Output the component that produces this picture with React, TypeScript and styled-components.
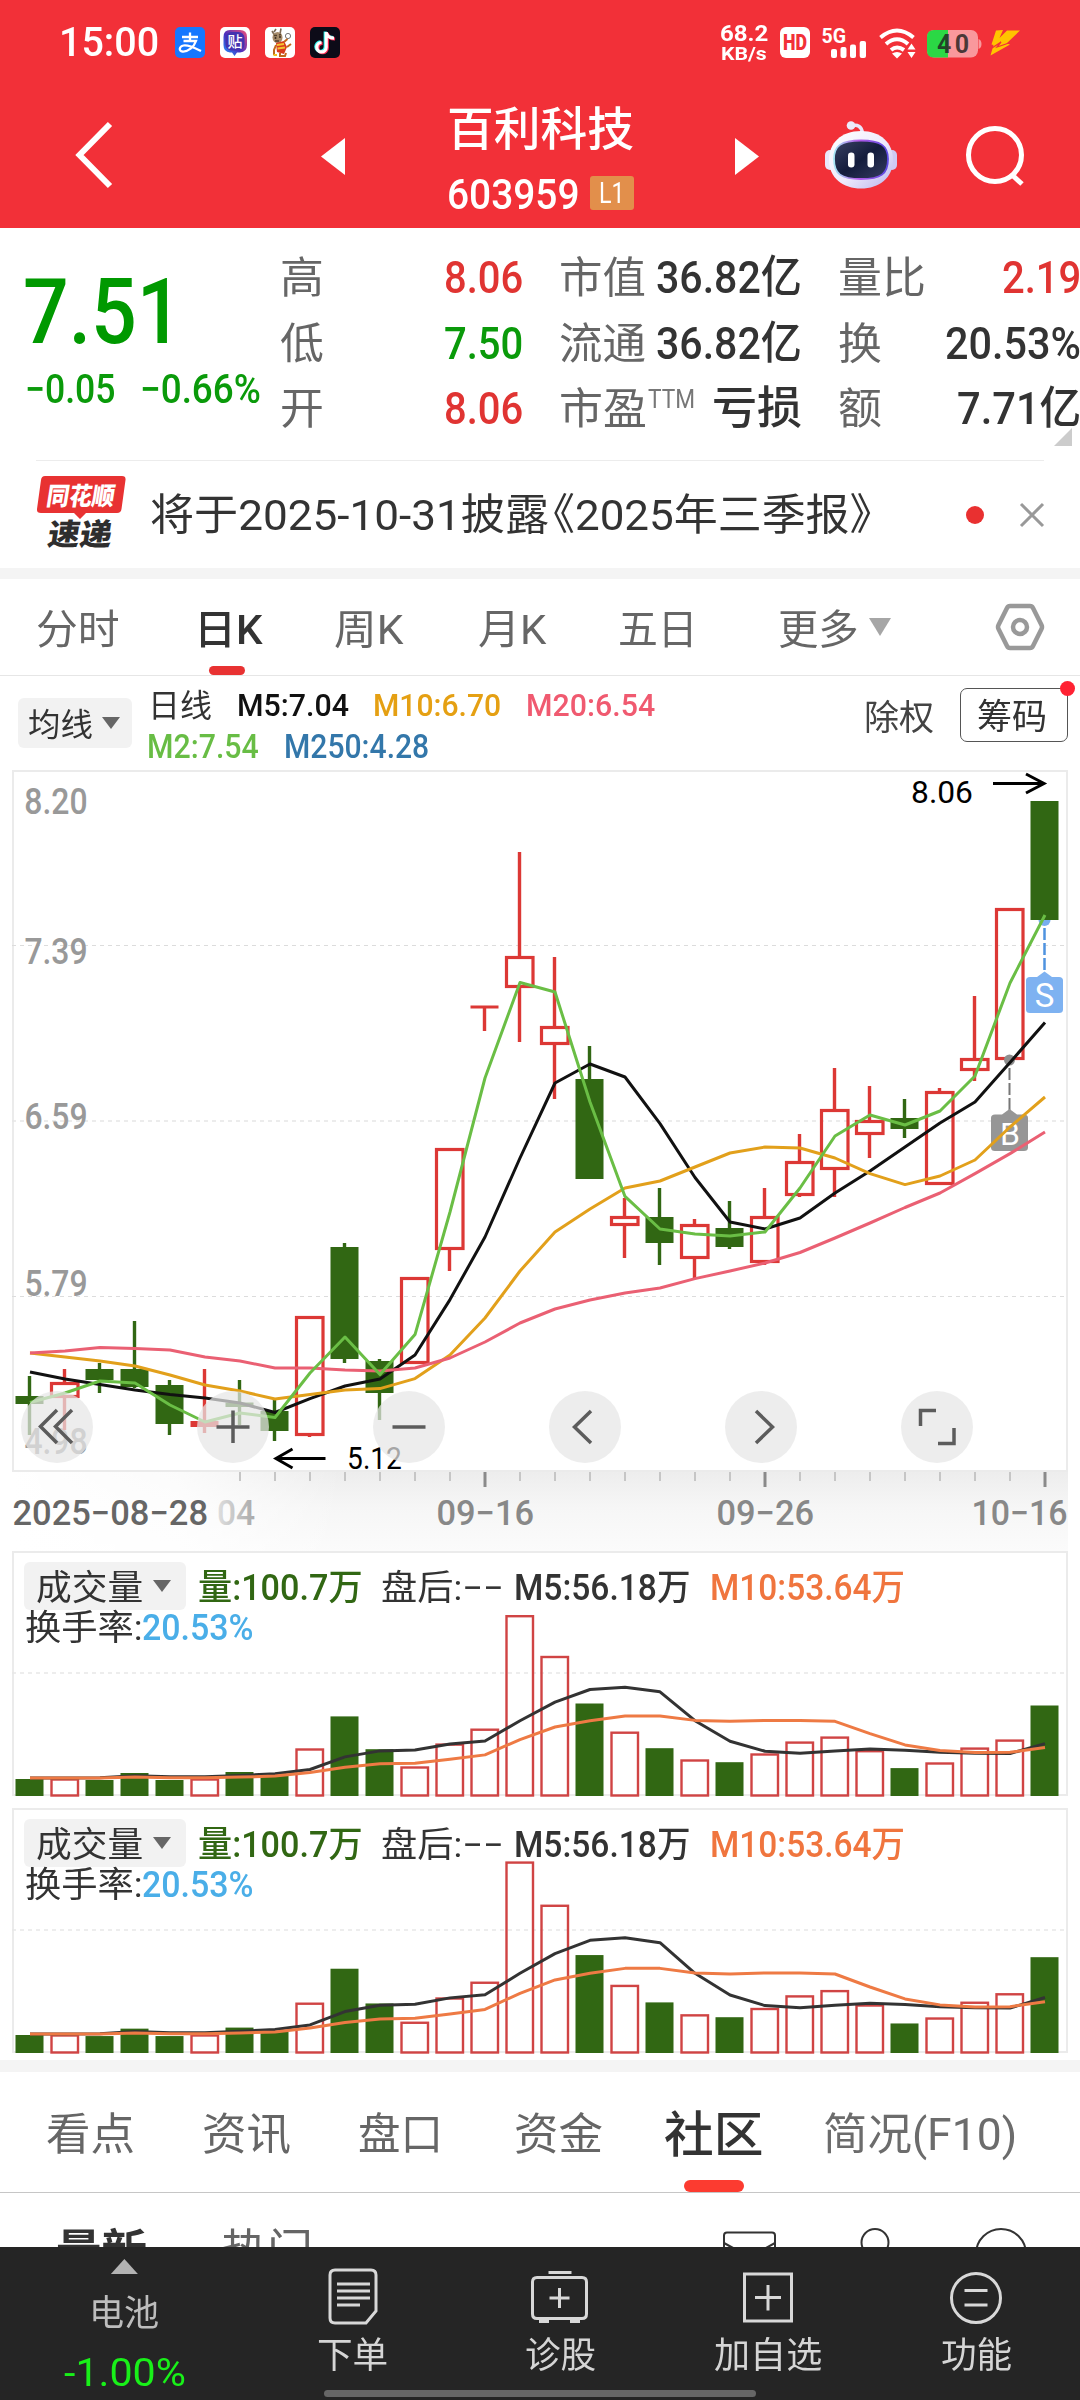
import React, { useLayoutEffect, useRef, useState } from "react";
import styled, { createGlobalStyle } from "styled-components";

const FONT = `Roboto, "Noto Sans CJK SC", sans-serif`;

const GlobalStyle = createGlobalStyle`
  * { box-sizing: border-box; }
  body { margin: 0; background: #fff; font-family: ${FONT}; }
  svg { display: block; flex: none; overflow: visible; }
  svg text { font-family: ${FONT}; }
`;

/* ---------- text set to a fixed measure ---------- */

const FitBox = styled.span<{ $w: number; $gap: number; $size: number; $weight: number; $color: string; $drop: number }>`
  display: block;
  flex: none;
  width: ${(p) => p.$w}px;
  height: ${(p) => p.$size}px;
  margin-left: ${(p) => p.$gap}px;
  font-size: ${(p) => p.$size}px;
  line-height: ${(p) => p.$size + p.$drop * 2}px;
  font-weight: ${(p) => p.$weight};
  color: ${(p) => p.$color};
  white-space: nowrap;
`;
const FitInner = styled.span`
  display: inline-block;
  margin-left: -0.045em;
  transform-origin: 0 50%;
  font-feature-settings: "halt";
`;

type FitProps = { w: number; size: number; gap?: number; weight?: number; color?: string; drop?: number; children: React.ReactNode };

function Fit({ w, size, gap = 0, weight = 400, color = "inherit", drop = 0, children }: FitProps) {
  const ref = useRef<HTMLSpanElement>(null);
  const [scale, setScale] = useState(1);
  useLayoutEffect(() => {
    if (ref.current) setScale((w + size * 0.09) / ref.current.offsetWidth);
  }, [w, size]);
  return (
    <FitBox $w={w} $gap={gap} $size={size} $weight={weight} $color={color} $drop={drop}>
      <FitInner ref={ref} style={{ transform: `scaleX(${scale})` }}>{children}</FitInner>
    </FitBox>
  );
}

/* ---------- page ---------- */

const Screen = styled.div`
  width: 1080px;
  height: 2400px;
  display: flex;
  flex-direction: column;
  overflow: hidden;
  background: #fff;
  color: #333;
`;
const Band = styled.div<{ $h: number }>`
  flex: none;
  height: ${(p) => p.$h}px;
  background: #f4f4f4;
`;

/* ---------- top ---------- */

const Top = styled.header`
  flex: none;
  height: 228px;
  background: #f23038;
  color: #fff;
`;
const StatusBar = styled.div`
  display: flex;
  align-items: center;
  height: 85px;
  padding-left: 61px;
`;
const StatusIcons = styled.div`
  display: flex;
  gap: 15px;
  margin-left: 18px;
`;
const StatusRight = styled.div`
  display: flex;
  align-items: center;
  margin-left: 381px;
`;
const Speed = styled.div`
  display: flex;
  flex-direction: column;
  width: 46px;
  margin-right: 13px;
`;
const NavBar = styled.div`
  display: flex;
  align-items: center;
  height: 143px;
`;
const TitleBlock = styled.div`
  width: 390px;
  height: 143px;
  padding: 21px 0 0 104px;
`;
const CodeRow = styled.div`
  display: flex;
  align-items: center;
  height: 34px;
  margin-top: 24px;
`;
const LevelBadge = styled.span`
  display: flex;
  align-items: center;
  justify-content: center;
  width: 44px;
  height: 34px;
  margin-left: 12px;
  border-radius: 3px;
  background: #e28f4b;
`;

function AlipayIcon() {
  return (
    <svg width="30" height="31" viewBox="0 0 30 31">
      <rect width="30" height="31" rx="5" fill="#1677ff" />
      <path d="M7 10H23M15 5.5V14M8.500 14H21C19 20 13 25 7.500 24.500C3.500 24 4 19.500 8.500 18.500C13.500 17.500 20 21 26 24" fill="none" stroke="#fff" strokeWidth="2.300" />
    </svg>
  );
}
function TiebaIcon() {
  return (
    <svg width="30" height="31" viewBox="0 0 30 31">
      <defs>
        <linearGradient id="tieba" x1="0" y1="1" x2="1" y2="0">
          <stop offset="0" stopColor="#1f9cff" /><stop offset=".45" stopColor="#4a2fc0" /><stop offset="1" stopColor="#f0507a" />
        </linearGradient>
      </defs>
      <rect width="30" height="31" rx="5" fill="#fff" />
      <path d="M10 3H20Q27 3 27 10V18Q27 25 20 25.500H17L14.500 29L12 25.500H10Q3.500 25 3.500 18V10Q3.500 3 10 3Z" fill="url(#tieba)" />
      <rect x="5.500" y="5" width="19" height="18.500" rx="6" fill="#4433b0" />
      <text x="15" y="20" fontSize="15" fontWeight="500" fill="#fff" textAnchor="middle">贴</text>
    </svg>
  );
}
function MascotIcon() {
  return (
    <svg width="30" height="31" viewBox="0 0 30 31">
      <rect width="30" height="31" rx="5" fill="#fff" />
      <path d="M7 4L10 9M16 1.500L15 7M9 5L11 2" stroke="#7b6a55" strokeWidth="1.600" fill="none" />
      <ellipse cx="12.500" cy="10.500" rx="5" ry="5.500" fill="#a58a68" />
      <path d="M9 8.500H12M14 8L16 7.500M10 14H14" stroke="#54402c" strokeWidth="1.300" />
      <circle cx="10.500" cy="11" r="1" fill="#3a2a1c" /><circle cx="15" cy="10" r="1" fill="#3a2a1c" />
      <circle cx="23" cy="9" r="2.600" fill="#fff" stroke="#777" strokeWidth="1" />
      <path d="M11 16L19 14L22 20L19 27L12 25Z" fill="#d93a1c" />
      <path d="M12 18L19 17M12.500 21.500L20 20.500" stroke="#f4c430" strokeWidth="2" />
      <path d="M19 15L22.500 12M11 18L9 23V28M15 26V29H20L21 26M22 20L26 17" stroke="#c2691c" strokeWidth="2" fill="none" />
      <path d="M8.500 28H12" stroke="#f0c020" strokeWidth="2" />
    </svg>
  );
}
function DouyinIcon() {
  const note = "M16.200 5V20.200A4.700 4.700 0 1 1 11.500 15.500M16.200 5.500C17 9 19.500 11 24 11.200";
  return (
    <svg width="30" height="31" viewBox="0 0 30 31">
      <rect width="30" height="31" rx="5" fill="#0d0b18" />
      <g fill="none" strokeWidth="3.200">
        <path d={note} stroke="#25f4ee" transform="translate(-1 -.6)" />
        <path d={note} stroke="#fe2c55" transform="translate(1.100 .8)" />
        <path d={note} stroke="#fff" />
      </g>
    </svg>
  );
}
function SignalCluster() {
  return (
    <svg width="240" height="36" viewBox="780 25 240 36">
      <rect x="780" y="27" width="30" height="31" rx="6" fill="#fff" />
      <text x="783" y="50" fontSize="21.500" fontWeight="900" fill="#f23038" textLength="24" lengthAdjust="spacingAndGlyphs">HD</text>
      <text x="821.500" y="42.500" fontSize="20" fontWeight="700" fill="#fff" textLength="24.500" lengthAdjust="spacingAndGlyphs">5G</text>
      <g fill="#fff">
        <rect x="831" y="49" width="6" height="9" rx="2" />
        <rect x="840.500" y="47" width="6" height="11" rx="2" />
        <rect x="850" y="44.500" width="6" height="13.500" rx="2" />
        <rect x="859.700" y="41" width="6.300" height="17" rx="2" />
      </g>
      <g fill="none" stroke="#fff" strokeWidth="4">
        <path d="M880.500 37.500Q897 23.500 913.500 37.500" />
        <path d="M886 44Q897 34.500 908 44" />
        <path d="M891 50Q897 45 904 50" />
      </g>
      <path d="M892 53.500Q897 50.500 902 53.500L897 58.500Z" fill="#fff" />
      <path d="M911.500 43.500L915.500 49.500H907.500ZM911.500 58L915.500 52H907.500Z" fill="#fff" />
      <rect x="927" y="30" width="51" height="27.500" rx="7" fill="#f9989c" />
      <path d="M978.500 39Q981.500 40 981.500 44Q981.500 48 978.500 49Z" fill="#f9989c" />
      <path d="M934 30H948V57.500H934Q927 57.500 927 50.500V37Q927 30 934 30Z" fill="#2bd845" />
      <text x="937" y="53" fontSize="25" fontWeight="700" fill="#222" fillOpacity=".82" textLength="32" lengthAdjust="spacing">40</text>
      <path d="M996 30.500L1003 30L999.500 38L1007 30.500H1020L1006.500 43.500L1010 44.500L990.500 55.500L993.500 45L991.500 44.500Z" fill="#ffc400" />
      <path d="M992 48L1001 42L997 47L1009 43" fill="none" stroke="#f23038" strokeWidth="1.300" />
    </svg>
  );
}
const Tri = styled.i<{ $dir: "left" | "right" }>`
  width: 24px;
  height: 37px;
  background: #fff;
  clip-path: ${(p) => (p.$dir === "left" ? "polygon(0 50%, 100% 0, 100% 100%)" : "polygon(100% 50%, 0 0, 0 100%)")};
`;
const BackSlot = styled.div`
  width: 321px;
  padding: 0 0 4px 72px;
`;
const NavActions = styled.div`
  display: flex;
  align-items: center;
  gap: 66px;
  margin-left: 64px;
  padding-bottom: 4px;
`;
function RobotIcon() {
  return (
    <svg width="76" height="72" viewBox="0 0 76 72">
      <defs>
        <linearGradient id="shell" x1="0" y1="0" x2="1" y2="1">
          <stop offset="0" stopColor="#fff" /><stop offset=".55" stopColor="#eeeafc" /><stop offset="1" stopColor="#b9b4ec" />
        </linearGradient>
        <linearGradient id="visor" x1="0" y1="0" x2="1" y2="1">
          <stop offset="0" stopColor="#3a4264" /><stop offset=".5" stopColor="#141c3c" /><stop offset="1" stopColor="#353c60" />
        </linearGradient>
        <linearGradient id="rim" x1="0" y1="0" x2="1" y2="0">
          <stop offset="0" stopColor="#a5e6f4" /><stop offset=".45" stopColor="#b45be8" /><stop offset="1" stopColor="#5a48e0" />
        </linearGradient>
      </defs>
      <path d="M28 7Q38 4 39.500 14" fill="none" stroke="#eae6fa" strokeWidth="3.500" />
      <circle cx="28" cy="6.500" r="4.300" fill="#ecebfb" />
      <rect x="2" y="31" width="10" height="20" rx="5" fill="#e9e6fb" />
      <rect x="64" y="31" width="10" height="20" rx="5" fill="#cfcaf4" />
      <path d="M38 12C58 12 70 24 70 41C70 59 56 69.500 38 69.500C20 69.500 6 59 6 41C6 24 18 12 38 12Z" fill="url(#shell)" />
      <path d="M38 21.500C58 21.500 65 27 65 40C65 55 58 60 38 60C18 60 11 55 11 40C11 27 18 21.500 38 21.500Z" fill="url(#visor)" stroke="url(#rim)" strokeWidth="1.800" />
      <rect x="25" y="33.500" width="6.500" height="15" rx="3.200" fill="#fff" />
      <rect x="44.500" y="33.500" width="6.500" height="15" rx="3.200" fill="#fff" />
    </svg>
  );
}

/* ---------- quote ---------- */

const Quote = styled.section`
  position: relative;
  display: flex;
  flex: none;
  height: 232px;
`;
const PriceBlock = styled.div`
  flex: none;
  width: 282px;
  padding: 39px 0 0 27px;
`;
const ChangeRow = styled.div`
  display: flex;
  margin-top: 12px;
`;
const StatColumn = styled.div`
  flex: none;
  width: 239px;
  margin-right: 40px;
  padding-top: 17px;
`;
const StatRow = styled.div`
  display: flex;
  align-items: center;
  justify-content: space-between;
  height: 65.600px;
`;
const StatLabel = styled.div`
  display: flex;
`;
const Corner = styled.i`
  position: absolute;
  left: 1054px;
  top: 200px;
  width: 18px;
  height: 18px;
  background: #ccc;
  clip-path: polygon(100% 0, 100% 100%, 0 100%);
`;

type Stat = { label: string; lw: number; value: string; vw: number; color?: string; sup?: boolean };
const RED = "#e03432";
const GREEN = "#0a9a0a";
const stats: Stat[][] = [
  [
    { label: "高", lw: 40, value: "8.06", vw: 75, color: RED },
    { label: "低", lw: 40, value: "7.50", vw: 75, color: GREEN },
    { label: "开", lw: 40, value: "8.06", vw: 75, color: RED },
  ],
  [
    { label: "市值", lw: 83, value: "36.82亿", vw: 142 },
    { label: "流通", lw: 83, value: "36.82亿", vw: 142 },
    { label: "市盈", lw: 84, value: "亏损", vw: 86, sup: true },
  ],
  [
    { label: "量比", lw: 84, value: "2.19", vw: 75, color: RED },
    { label: "换", lw: 40, value: "20.53%", vw: 132 },
    { label: "额", lw: 40, value: "7.71亿", vw: 120 },
  ],
];

/* ---------- notice ---------- */

const Notice = styled.section`
  flex: none;
  display: flex;
  align-items: center;
  height: 108px;
  margin: 0 36px;
  border-top: 1px solid #ececec;
`;
const LogoSlot = styled.span`
  margin-bottom: 5px;
`;
const Dot = styled.i<{ $d: number; $gap: number }>`
  flex: none;
  width: ${(p) => p.$d}px;
  height: ${(p) => p.$d}px;
  margin-left: ${(p) => p.$gap}px;
  border-radius: 50%;
  background: #e93030;
`;
const CloseSlot = styled.span`
  margin-left: 36px;
`;
function ExpressLogo() {
  return (
    <svg width="90" height="74" viewBox="0 0 90 74">
      <path d="M9 1H86Q90 1 89.500 5L85.500 34Q85 38 81 38H50L44 44L38 38H5Q.5 38 1 34L5 5Q5.500 1 9 1Z" fill="#e83232" />
      <g fontWeight="900">
        <text transform="translate(9.500 30) skewX(-9)" fontSize="25" fill="#fff" textLength="68" lengthAdjust="spacingAndGlyphs">同花顺</text>
        <text transform="translate(10.500 70) skewX(-9)" fontSize="30" fill="#2e2e2e" textLength="64" lengthAdjust="spacingAndGlyphs">速递</text>
      </g>
    </svg>
  );
}

/* ---------- period tabs ---------- */

const PeriodTabs = styled.nav`
  position: relative;
  flex: none;
  display: flex;
  align-items: center;
  height: 97px;
  padding-left: 38px;
  border-bottom: 1px solid #e6e6e6;
`;
const Underline = styled.i<{ $x: number; $w: number; $h: number; $color: string }>`
  position: absolute;
  bottom: 0;
  left: ${(p) => p.$x}px;
  width: ${(p) => p.$w}px;
  height: ${(p) => p.$h}px;
  border-radius: 6px;
  background: ${(p) => p.$color};
`;
const Caret = styled.i<{ $w: number; $h: number; $gap: number; $color: string }>`
  flex: none;
  width: ${(p) => p.$w}px;
  height: ${(p) => p.$h}px;
  margin-left: ${(p) => p.$gap}px;
  background: ${(p) => p.$color};
  clip-path: polygon(0 0, 100% 0, 50% 100%);
`;
const GearSlot = styled.span`
  margin-left: 104px;
`;

/* ---------- moving averages ---------- */

const AverageBar = styled.section`
  flex: none;
  display: flex;
  height: 94px;
  padding-left: 18px;
`;
const Picker = styled.button<{ $w: number; $h: number; $pad: number; $top?: number }>`
  flex: none;
  display: flex;
  align-items: center;
  width: ${(p) => p.$w}px;
  height: ${(p) => p.$h}px;
  margin-top: ${(p) => p.$top || 0}px;
  padding: 0 0 0 ${(p) => p.$pad}px;
  border: 0;
  border-radius: 6px;
  background: #f2f2f2;
  font-family: inherit;
  color: #333;
  text-align: left;
`;
const AverageLines = styled.div`
  width: 716px;
  padding-top: 13px;
`;
const AverageLine = styled.div`
  display: flex;
  height: 41px;
  padding-left: 17px;
`;
const ChipsButton = styled.button`
  position: relative;
  display: flex;
  align-items: center;
  width: 108px;
  height: 54px;
  margin: 12px 0 0 27px;
  padding: 0 0 0 18px;
  border: 1.500px solid #555;
  border-radius: 7px;
  background: #fff;
  font-family: inherit;
  text-align: left;
`;
const NewDot = styled.i`
  position: absolute;
  top: -8px;
  right: -8px;
  width: 15px;
  height: 15px;
  border-radius: 50%;
  background: #ff2233;
`;
const RightsSlot = styled.div`
  padding-top: 23px;
`;

/* ---------- charts ---------- */

type Candle = { up: boolean; top: number; bottom: number; high: number; low: number };
const c = (up: number, top: number, bottom: number, high = top, low = bottom): Candle => ({ up: !!up, top, bottom, high, low });
const candles: Candle[] = [
  c(0, 1396, 1404, 1376, 1435), c(1, 1382, 1398, 1369, 1430), c(0, 1369, 1380, 1363, 1393), c(0, 1369, 1387, 1321, 1388),
  c(0, 1385, 1424, 1380, 1435), c(1, 1421, 1427, 1369, 1433), c(0, 1402.5, 1407, 1380, 1425), c(0, 1411, 1431, 1400, 1441),
  c(1, 1316, 1436, 1316, 1437), c(0, 1247, 1359, 1243, 1363), c(0, 1361, 1393, 1359, 1420), c(1, 1277, 1364),
  c(1, 1148, 1250, 1148, 1271), c(1, 1006, 1008, 1006, 1031), c(1, 956, 988, 852, 1042), c(1, 1026, 1045, 957, 1099),
  c(0, 1079, 1179, 1046), c(1, 1216, 1226, 1198, 1258), c(0, 1217, 1243, 1188, 1265), c(1, 1224, 1259, 1219, 1278),
  c(0, 1228, 1247, 1201, 1249), c(1, 1216, 1263, 1188, 1265), c(1, 1161, 1196, 1134, 1197), c(1, 1109, 1170, 1068, 1197),
  c(1, 1120, 1135, 1086, 1158), c(0, 1118, 1129, 1099, 1138), c(1, 1091, 1185, 1088), c(1, 1058, 1071, 996, 1081),
  c(1, 908, 1060), c(0, 801, 920),
];
const ma5 = [1372, 1379, 1384.6, 1390, 1394.6, 1398, 1403, 1412.5, 1398.6, 1386, 1379, 1355, 1299.6, 1237, 1158, 1083, 1064, 1077, 1123.6, 1177.5, 1222, 1229, 1218, 1193, 1171, 1147, 1123, 1102, 1062.5, 1022.5];
const ma10 = [1353, 1357, 1361, 1366, 1375, 1385, 1391, 1399, 1394.6, 1390, 1388.6, 1378.6, 1355, 1318, 1271, 1232, 1209, 1188, 1181, 1167, 1153, 1147, 1148, 1158, 1173.6, 1184.6, 1176, 1160, 1127, 1097];
const ma20 = [1353, 1351, 1347.5, 1348.6, 1350, 1357, 1361, 1368, 1368, 1370, 1371, 1368, 1358, 1342, 1323, 1309, 1300, 1293, 1288, 1278.6, 1271, 1263, 1252.5, 1238, 1223, 1207.5, 1193, 1173.6, 1153.6, 1132];
const ma2 = [1402.5, 1393, 1381, 1383, 1405, 1422, 1413, 1417.5, 1373, 1337, 1374.6, 1334.6, 1212, 1078, 982.5, 992, 1102, 1196.4, 1229, 1234, 1236, 1232, 1188, 1136, 1115, 1125, 1111, 1076, 983, 915];
const xAt = (i: number) => 30 + 35 * i;
const line = (ys: number[]) => ys.map((y, i) => `${xAt(i)},${y}`).join(" ");

const ChartFrame = styled.section`
  position: relative;
  flex: none;
  width: 1056px;
  height: 702px;
  margin-left: 12px;
  border: 2px solid #ebebeb;
`;
const ChartSvg = styled.svg`
  margin: -2px;
`;
const ChartControls = styled.div`
  position: absolute;
  left: 7px;
  bottom: 7px;
  display: flex;
  gap: 104px;
`;
const RoundButton = styled.button`
  display: flex;
  align-items: center;
  justify-content: center;
  width: 72px;
  height: 72px;
  padding: 0;
  border: 0;
  border-radius: 50%;
  background: rgba(230, 230, 230, 0.72);
`;
const controlPaths = [
  "M36 19L19.500 35.500L36 52M51 19L34.500 35.500L51 52",
  "M36 19.500V52M19.500 36H52.500",
  "M19.500 36H52.500",
  "M42 20L25.500 36L42 52",
  "M31 20L47.500 36L31 52",
  "M19.500 35V19.500H35M53 37V52.500H37",
];

function Label({ x, y, w, size, fill, children, weight = 400 }: { x: number; y: number; w: number; size: number; fill: string; weight?: number; children: string }) {
  return (
    <text x={x - size * 0.045} y={y} fontSize={size} fontWeight={weight} fill={fill} textLength={w + size * 0.09} lengthAdjust="spacingAndGlyphs">{children}</text>
  );
}

function PriceChart() {
  return (
    <ChartSvg width="1056" height="702" viewBox="12 770 1056 702">
      <g stroke="#dcdcdc" strokeWidth="1" strokeDasharray="4 4">
        <path d="M12 945.500H1068" /><path d="M12 1121H1068" strokeWidth="1.500" stroke="#e6e6e6" /><path d="M12 1296.500H1068" />
      </g>
      <Label x={26} y={814} w={60} size={37} fill="#999" weight={500}>8.20</Label>
      <Label x={26} y={963.5} w={60} size={36} fill="#999" weight={500}>7.39</Label>
      <Label x={26} y={1129} w={60} size={36} fill="#999" weight={500}>6.59</Label>
      <Label x={26} y={1296} w={60} size={36} fill="#999" weight={500}>5.79</Label>
      <Label x={26} y={1454} w={60} size={36} fill="#999" weight={500}>4.98</Label>
      {candles.map((k, i) => {
        const x = xAt(i) - 0.5;
        const color = k.up ? "#dc3835" : "#316713";
        const hollow = k.up && k.bottom - k.top > 6;
        return (
          <g key={i}>
            {k.high < k.top && <path d={`M${x} ${k.high}V${k.top}`} stroke={color} strokeWidth="3.400" />}
            {k.low > k.bottom && <path d={`M${x} ${k.bottom}V${k.low}`} stroke={color} strokeWidth="3.400" />}
            {hollow ? (
              <rect x={x - 13} y={k.top + 1.5} width="26.500" height={k.bottom - k.top - 3} fill="none" stroke={color} strokeWidth="3.200" />
            ) : (
              <rect x={x - 14} y={k.top - (k.bottom - k.top < 3 ? 0.5 : 0)} width="28" height={Math.max(3, k.bottom - k.top)} fill={color} />
            )}
          </g>
        );
      })}
      <path d="M1038.500 920H1050.500A6 6 0 0 1 1038.500 920Z" fill="#78aeef" />
      <path d="M1044.500 928V972" stroke="#4f93df" strokeWidth="2.500" strokeDasharray="12 3" />
      <circle cx="1009.500" cy="1060" r="5.500" fill="#8e8e8e" />
      <path d="M1009.500 1068V1110" stroke="#777" strokeWidth="2" strokeDasharray="12 3" />
      <path d="M995 1114.500H1002L1009.500 1109L1017 1114.500H1024Q1028 1114.500 1028 1118V1147.500Q1028 1151 1024 1151H995Q991 1151 991 1147.500V1118Q991 1114.500 995 1114.500Z" fill="#969696" />
      <text x="1010" y="1145" fontSize="32" fill="#fff" textAnchor="middle">B</text>
      <g fill="none" strokeWidth="3" strokeLinejoin="round">
        <polyline points={line(ma5)} stroke="#111" />
        <polyline points={line(ma10)} stroke="#e2a01b" />
        <polyline points={line(ma20)} stroke="#ea6073" />
        <polyline points={line(ma2)} stroke="#6abe45" />
      </g>
      <path d="M1030 977H1037L1044.500 971.500L1052 977H1059Q1063 977 1063 980.500V1009.500Q1063 1013 1059 1013H1030Q1026 1013 1026 1009.500V980.500Q1026 977 1030 977Z" fill="#7eb2f1" />
      <text x="1044.500" y="1007" fontSize="33" fill="#fff" textAnchor="middle">S</text>
      <Label x={912.5} y={802.5} w={59} size={32} fill="#000">8.06</Label>
      <path d="M993 783.500H1044M1026 774L1044 783.500L1026 793" fill="none" stroke="#000" strokeWidth="3" />
      <Label x={348.5} y={1469} w={52} size={31} fill="#000">5.12</Label>
      <path d="M325.500 1458.500H276M292.500 1449L276 1458.500L292.500 1468" fill="none" stroke="#000" strokeWidth="3" />
    </ChartSvg>
  );
}

const AxisBox = styled.div`
  flex: none;
  height: 79px;
  padding-left: 12px;
`;
function DateAxis() {
  return (
    <svg width="1056" height="79" viewBox="12 1472 1056 79">
      <defs>
        <linearGradient id="shade" x1="0" y1="0" x2="0" y2="1">
          <stop offset="0" stopColor="#ededed" /><stop offset=".45" stopColor="#f6f6f6" /><stop offset="1" stopColor="#fbfbfb" />
        </linearGradient>
        <linearGradient id="veil" x1="0" y1="0" x2="1" y2="0">
          <stop offset="0" stopColor="#fff" /><stop offset=".5" stopColor="#fff" stopOpacity=".8" /><stop offset="1" stopColor="#fff" stopOpacity="0" />
        </linearGradient>
        <linearGradient id="fade" gradientUnits="userSpaceOnUse" x1="212" y1="0" x2="256" y2="0">
          <stop offset="0" stopColor="#e6e6e6" /><stop offset="1" stopColor="#a8a8a8" />
        </linearGradient>
      </defs>
      <rect x="12" y="1472" width="1056" height="79" fill="url(#shade)" />
      <rect x="12" y="1472" width="330" height="79" fill="url(#veil)" />
      {Array.from({ length: 24 }, (_, n) => n + 6).map((i) => {
        const major = i === 13 || i === 21 || i === 29;
        return <path key={i} d={`M${xAt(i)} 1472V${major ? 1487 : 1481}`} stroke={major ? "#8a8a8a" : "#c6c6c6"} strokeWidth={major ? 3 : 2} />;
      })}
      <Label x={14} y={1525} w={192.5} size={35} fill="#666" weight={500}>2025−08−28</Label>
      <Label x={218.5} y={1525} w={35} size={35} fill="url(#fade)" weight={500}>04</Label>
      <Label x={438} y={1525} w={94.5} size={35} fill="#888" weight={500}>09−16</Label>
      <Label x={718} y={1525} w={94.5} size={35} fill="#888" weight={500}>09−26</Label>
      <Label x={973} y={1525} w={93} size={35} fill="#888" weight={500}>10−16</Label>
    </svg>
  );
}

/* heights above the panel's base line, in the first panel's pixels */
const volume = [17, 17.5, 16, 23, 16, 17.5, 24, 20, 47.5, 79.6, 46.8, 29.5, 52.4, 67.3, 180.8, 140, 92.5, 64.3, 47.8, 36.5, 33.8, 42.5, 54.4, 59.4, 45.8, 27.9, 33.5, 48.4, 56.4, 90.5];
const vol5 = [714, 714, 713, 707, 710, 710, 706, 701, 688, 650, 632, 629, 611, 602, 541, 485, 447, 440, 454, 541, 603, 633, 639, 632, 626, 630, 636, 639, 640, 610].map((v) => (768 - v) / 3.015);
const vol10 = [714, 714, 714, 711, 713, 713, 711, 708, 697, 681, 671, 669, 657, 644, 598, 560, 541, 527, 527, 540, 543, 540, 540, 543, 580, 614, 631, 637, 636, 622].map((v) => (768 - v) / 3.015);

const VolumePanel = styled.section<{ $gap: number }>`
  position: relative;
  flex: none;
  width: 1056px;
  height: 245px;
  margin: 0 0 ${(p) => p.$gap}px 12px;
  border: 2px solid #ebebeb;
`;
const VolumeBack = styled.svg`
  position: absolute;
  left: -2px;
  top: -2px;
`;
const VolumeLegend = styled.div`
  position: relative;
  display: flex;
  align-items: center;
  height: 48px;
  margin-top: 9px;
  padding-left: 10px;
`;
const TurnoverRow = styled.div`
  position: relative;
  display: flex;
  align-items: center;
  height: 34px;
  padding-left: 12.500px;
`;

function Volume({ zoom, gap }: { zoom: number; gap: number }) {
  const base = 245;
  return (
    <VolumePanel $gap={gap}>
      <VolumeBack width="1056" height="247" viewBox="12 0 1056 247">
        <path d="M12 122H1068" stroke="#e8e8e8" strokeWidth="1.500" strokeDasharray="4 4" />
        {volume.map((v, i) => {
          const h = v * zoom;
          const x = xAt(i) - 0.5;
          const up = candles[i].up;
          return up ? (
            <rect key={i} x={x - 13} y={base - h + 1} width="26.500" height={h - 1.5} fill="none" stroke="#d04444" strokeWidth="2.400" />
          ) : (
            <rect key={i} x={x - 14} y={base - h} width="28" height={h} fill="#316713" />
          );
        })}
        <g fill="none" strokeWidth="3" strokeLinejoin="round">
          <polyline points={line(vol5.map((v) => base - v * zoom))} stroke="#333" />
          <polyline points={line(vol10.map((v) => base - v * zoom))} stroke="#ee7a44" />
        </g>
      </VolumeBack>
      <VolumeLegend>
        <Picker $w={162} $h={48} $pad={14}>
          <Fit w={104} size={35} drop={2}>成交量</Fit>
          <Caret $w={18} $h={12} $gap={11} $color="#666" />
        </Picker>
        <Fit gap={14} w={161} size={36} drop={2} weight={500} color="#316713">量:100.7万</Fit>
        <Fit gap={22} w={120} size={35} drop={2}>盘后:−−</Fit>
        <Fit gap={13} w={173} size={36} drop={2} weight={500}>M5:56.18万</Fit>
        <Fit gap={23} w={192} size={36} drop={2} weight={500} color="#f0753e">M10:53.64万</Fit>
      </VolumeLegend>
      <TurnoverRow>
        <Fit w={114} size={35} drop={1}>换手率:</Fit>
        <Fit gap={3} w={108} size={36} drop={1} weight={500} color="#4aaee8">20.53%</Fit>
      </TurnoverRow>
    </VolumePanel>
  );
}

/* ---------- lower tabs and feed ---------- */

const InfoTabs = styled.nav`
  position: relative;
  flex: none;
  display: flex;
  align-items: center;
  height: 121px;
  padding-left: 47.500px;
  border-bottom: 1px solid #c6c6c6;
`;
const FadeOut = styled.span`
  display: flex;
  color: transparent;
  background: linear-gradient(to right, #666 80%, #999);
  background-clip: text;
  -webkit-background-clip: text;
`;
const FeedHead = styled.section`
  flex: none;
  display: flex;
  align-items: flex-start;
  height: 54px;
  padding: 35px 0 0 58px;
`;
const FeedIcons = styled.div`
  margin-left: 411px;
`;

const BottomBar = styled.footer`
  position: relative;
  flex: none;
  display: flex;
  height: 153px;
  background: #252525;
  color: #d5d5d5;
`;
const Sector = styled.div`
  display: flex;
  flex-direction: column;
  align-items: center;
  width: 249px;
  padding-top: 12px;
`;
const UpMark = styled.i`
  width: 27px;
  height: 15px;
  margin-bottom: 20px;
  background: #b3b3b3;
  clip-path: polygon(50% 0, 100% 100%, 0 100%);
`;
const SectorChange = styled.div`
  margin-top: 23px;
`;
const Action = styled.div`
  display: flex;
  flex-direction: column;
  align-items: center;
  width: 208px;
  padding-top: 21px;
`;
const ActionText = styled.div`
  margin-top: 11px;
`;
const HomeBar = styled.i`
  position: absolute;
  left: 324px;
  bottom: 3px;
  width: 432px;
  height: 7px;
  border-radius: 4px;
  background: #666;
`;

const actions = [
  { text: "下单", w: 68, art: <path d="M7 2H43Q48 2 48 7V43L38 55H7Q2 55 2 50V7Q2 2 7 2ZM9 16H42M9 23H42M9 30H42M9 37H32" transform="translate(4 0)" /> },
  { text: "诊股", w: 68, art: <path d="M6 9.500H51Q55.500 9.500 55.500 14V46Q55.500 50.500 51 50.500H6Q1.500 50.500 1.500 46V14Q1.500 9.500 6 9.500ZM17.500 4.500H40.500M28.500 20V40M18.500 30H38.500M8 53.500H18M39 53.500H49" /> },
  { text: "加自选", w: 105, art: <path d="M5.500 6H52.500V53H5.500ZM29 17V42.500M16 29.500H42" /> },
  { text: "功能", w: 68, art: <><circle cx="29" cy="30" r="24.500" /><path d="M17.500 22.500H40.500M17.500 37H40.500" /></> },
];

export default function App() {
  return (
    <Screen>
      <GlobalStyle />
      <Top>
        <StatusBar>
          <Fit w={96} size={40} weight={500}>15:00</Fit>
          <StatusIcons>
            <AlipayIcon /><TiebaIcon /><MascotIcon /><DouyinIcon />
          </StatusIcons>
          <StatusRight>
            <Speed>
              <Fit w={46} size={22} drop={1} weight={700}>68.2</Fit>
              <Fit gap={1} w={44} size={19} weight={700}>KB/s</Fit>
            </Speed>
            <SignalCluster />
          </StatusRight>
        </StatusBar>
        <NavBar>
          <BackSlot>
            <svg width="44" height="70" viewBox="0 0 44 70">
              <path d="M38 4L7.500 35L38 66" fill="none" stroke="#fff" strokeWidth="6" />
            </svg>
          </BackSlot>
          <Tri $dir="left" />
          <TitleBlock>
            <Fit w={183} size={46} weight={500}>百利科技</Fit>
            <CodeRow>
              <Fit w={129} size={43} weight={500} drop={1}>603959</Fit>
              <LevelBadge><Fit w={23} size={29}>L1</Fit></LevelBadge>
            </CodeRow>
          </TitleBlock>
          <Tri $dir="right" />
          <NavActions>
            <RobotIcon />
            <svg width="64" height="64" viewBox="0 0 64 64">
              <circle cx="30" cy="32" r="26.500" fill="none" stroke="#fff" strokeWidth="5" />
              <path d="M46 51L57 61" stroke="#fff" strokeWidth="5" />
            </svg>
          </NavActions>
        </NavBar>
      </Top>

      <Quote>
        <PriceBlock>
          <Fit w={151} size={91} weight={500} color="#009900">7.51</Fit>
          <ChangeRow>
            <Fit w={87} size={40} weight={500} color={GREEN}>−0.05</Fit>
            <Fit gap={28} w={117} size={40} weight={500} color={GREEN}>−0.66%</Fit>
          </ChangeRow>
        </PriceBlock>
        {stats.map((column, n) => (
          <StatColumn key={n}>
            {column.map((s) => (
              <StatRow key={s.label}>
                <StatLabel>
                  <Fit w={s.lw} size={43} color="#666" drop={1}>{s.label}</Fit>
                  {s.sup && <Fit gap={4} w={45} size={25} color="#777">TTM</Fit>}
                </StatLabel>
                <Fit w={s.vw} size={45} weight={500} color={s.color}>{s.value}</Fit>
              </StatRow>
            ))}
          </StatColumn>
        ))}
        <Corner />
      </Quote>

      <Notice>
        <LogoSlot><ExpressLogo /></LogoSlot>
        <Fit gap={26} w={395} size={43} drop={1}>将于2025-10-31披露</Fit>
        <Fit gap={8} w={315} size={43} drop={1}>《2025年三季报》</Fit>
        <Dot $d={18} $gap={96} />
        <CloseSlot>
          <svg width="24" height="24" viewBox="0 0 24 24"><path d="M1 1L23 23M23 1L1 23" stroke="#999" strokeWidth="3" /></svg>
        </CloseSlot>
      </Notice>
      <Band $h={11} />

      <PeriodTabs>
        <Fit w={80} size={41} drop={3} color="#666">分时</Fit>
        <Fit gap={78} w={65} size={41} drop={3} weight={500}>日K</Fit>
        <Fit gap={75} w={66} size={41} drop={3} color="#666">周K</Fit>
        <Fit gap={78} w={65} size={41} drop={3} color="#666">月K</Fit>
        <Fit gap={75} w={76} size={41} drop={3} color="#666">五日</Fit>
        <Fit gap={84} w={77} size={41} drop={3} color="#666">更多</Fit>
        <Caret $w={22} $h={18} $gap={12} $color="#a6a6a6" />
        <GearSlot>
          <svg width="50" height="48" viewBox="0 0 50 48">
            <g fill="none" stroke="#999" strokeWidth="4.500" strokeLinejoin="round">
              <path d="M15 3H35Q37 3 38 5L46.500 22Q47.500 24 46.500 26L38 43Q37 45 35 45H15Q13 45 12 43L3.500 26Q2.500 24 3.500 22L12 5Q13 3 15 3Z" />
              <circle cx="25" cy="24" r="7" />
            </g>
          </svg>
        </GearSlot>
        <Underline $x={209} $w={36} $h={9} $color="#e83232" />
      </PeriodTabs>

      <AverageBar>
        <Picker $w={114} $h={50} $pad={11} $top={22}>
          <Fit w={62} size={32} drop={2}>均线</Fit>
          <Caret $w={18} $h={12} $gap={11} $color="#666" />
        </Picker>
        <AverageLines>
          <AverageLine>
            <Fit w={61} size={32} drop={1}>日线</Fit>
            <Fit gap={28} w={109} size={32} drop={0.5} weight={500} color="#111">M5:7.04</Fit>
            <Fit gap={27} w={125} size={32} drop={0.5} weight={500} color="#e5a013">M10:6.70</Fit>
            <Fit gap={28} w={126} size={32} drop={0.5} weight={500} color="#f05a70">M20:6.54</Fit>
          </AverageLine>
          <AverageLine>
            <Fit gap={-1} w={109} size={33} weight={500} color="#68bd45">M2:7.54</Fit>
            <Fit gap={28} w={142} size={33} weight={500} color="#3377aa">M250:4.28</Fit>
          </AverageLine>
        </AverageLines>
        <RightsSlot><Fit gap={18} w={67} size={35} drop={2} color="#444">除权</Fit></RightsSlot>
        <ChipsButton>
          <Fit w={67} size={35} drop={2} color="#333">筹码</Fit>
          <NewDot />
        </ChipsButton>
      </AverageBar>

      <ChartFrame>
        <PriceChart />
        <ChartControls>
          {controlPaths.map((d) => (
            <RoundButton key={d}>
              <svg width="72" height="72" viewBox="0 0 72 72"><path d={d} fill="none" stroke="#5c5c5c" strokeWidth="3.500" /></svg>
            </RoundButton>
          ))}
        </ChartControls>
      </ChartFrame>
      <AxisBox><DateAxis /></AxisBox>

      <Volume zoom={1} gap={12} />
      <Volume zoom={1.0587} gap={7} />

      <Band $h={12} />
      <InfoTabs>
        <Fit w={85} size={44} drop={3} color="#666">看点</Fit>
        <Fit gap={71.5} w={85} size={44} drop={3} color="#666">资讯</Fit>
        <Fit gap={71} w={81} size={44} drop={3} color="#666">盘口</Fit>
        <Fit gap={75} w={85} size={44} drop={3} color="#666">资金</Fit>
        <Fit gap={65} w={95} size={49} drop={3} weight={500}>社区</Fit>
        <FadeOut><Fit gap={64} w={190} size={44} drop={3} color="#6c6c6c">简况(F10)</Fit></FadeOut>
        <Underline $x={684} $w={60} $h={12} $color="#fc3b30" />
      </InfoTabs>
      <FeedHead>
        <Fit w={87} size={44} drop={1} weight={700}>最新</Fit>
        <Fit gap={78} w={88} size={44} drop={1} color="#666">热门</Fit>
        <FeedIcons>
          <svg width="310" height="60" viewBox="722 2228 310 60">
            <g fill="none" stroke="#333" strokeWidth="2">
              <rect x="724" y="2232.500" width="51" height="42" rx="3" />
              <path d="M724 2243L749.500 2257L775 2243" />
              <circle cx="875" cy="2242.500" r="13.500" />
              <circle cx="1001" cy="2254" r="25" />
            </g>
          </svg>
        </FeedIcons>
      </FeedHead>

      <BottomBar>
        <Sector>
          <UpMark />
          <Fit w={67} size={36} drop={2} color="#bdbdbd">电池</Fit>
          <SectorChange><Fit w={118} size={39} drop={1} color="#19f019">-1.00%</Fit></SectorChange>
        </Sector>
        {actions.map((a) => (
          <Action key={a.text}>
            <svg width="58" height="57" viewBox="0 0 58 57"><g fill="none" stroke="#d8d8d8" strokeWidth="3">{a.art}</g></svg>
            <ActionText><Fit w={a.w} size={36} drop={2}>{a.text}</Fit></ActionText>
          </Action>
        ))}
        <HomeBar />
      </BottomBar>
    </Screen>
  );
}
